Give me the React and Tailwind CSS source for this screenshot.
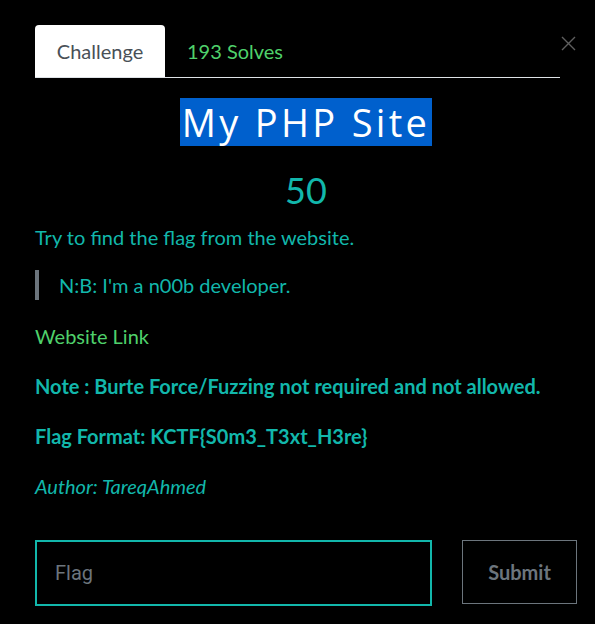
export default function App() {
  return (
    <div className="relative min-h-[624px] w-[595px] bg-black font-['Lato','Noto_Sans',sans-serif]">
      {/* close */}
      <button className="absolute right-[19px] top-[36px] text-[#5f5f5f]">
        <svg width="15" height="15" viewBox="0 0 15 15" fill="none" stroke="currentColor" strokeWidth="1.4">
          <path d="M1 1 L14 14 M14 1 L1 14" />
        </svg>
      </button>

      <div className="pl-[35px] pr-[18px] pt-[25px]">
        {/* tabs */}
        <div className="flex w-[525px] items-end border-b border-[#dee2e6]">
          <div className="flex h-[52px] w-[130px] items-center justify-center rounded-t-[4px] bg-white text-[20px] text-[#495057]">
            Challenge
          </div>
          <div className="flex h-[52px] items-center pl-[22px] text-[20px] text-[#4fd16b]">193 Solves</div>
        </div>

        {/* title */}
        <div className="mt-[20px] text-center">
          <span className="inline-block bg-[#0060cd] px-[2px] font-['Open_Sans',sans-serif] text-[38px] leading-[48px] tracking-[3.3px] text-white">
            My PHP Site
          </span>
        </div>

        <div className="mt-[22px] text-center text-[36px] leading-[44px] text-[#12b7ab]">50</div>

        <p className="mt-[13px] text-[20px] leading-[24px] text-[#12b7ab]">Try to find the flag from the website.</p>

        <div className="mt-[21px] flex h-[30px] items-center border-l-4 border-[#6c757d] pl-[20px] text-[20px] text-[#12b7ab]">
          N:B: I'm a n00b developer.
        </div>

        <p className="mt-[24px] text-[20px] leading-[24px] text-[#4fd16b]">Website Link</p>

        <p className="mt-[26px] text-[20px] font-bold leading-[24px] text-[#12b7ab]">
          Note : Burte Force/Fuzzing not required and not allowed.
        </p>

        <p className="mt-[26px] text-[20px] font-bold leading-[24px] text-[#12b7ab]">
          Flag Format: KCTF{"{"}S0m3_T3xt_H3re{"}"}
        </p>

        <p className="mt-[26px] text-[20px] italic leading-[24px] text-[#12b7ab]">Author: TareqAhmed</p>

        <div className="mt-[42px] flex items-start">
          <input
            placeholder="Flag"
            className="h-[66px] w-[397px] shrink-0 border-2 border-[#12b7ab] bg-black px-[18px] font-['Roboto',sans-serif] text-[20px] text-white placeholder:text-[#6c757d] outline-none"
          />
          <button className="ml-[30px] h-[64px] w-[115px] shrink-0 border border-[#6c757d] text-[20px] font-bold text-[#6c757d]">
            Submit
          </button>
        </div>
      </div>
    </div>
  )
}
